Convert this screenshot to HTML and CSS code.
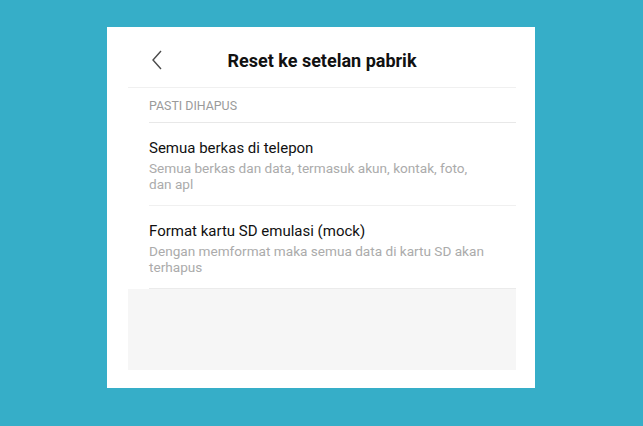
FILE: index.html
```html
<!DOCTYPE html>
<html>
<head>
<meta charset="utf-8">
<link rel="stylesheet" href="styles.css">
</head>
<body>
<div class="card">
  <div class="header">
    <svg class="back" width="12" height="20" viewBox="0 0 12 20"><path d="M10 1 L2 10 L10 19" fill="none" stroke="#4a4a4a" stroke-width="1.4"/></svg>
    <div class="title">Reset ke setelan pabrik</div>
  </div>
  <div class="section">PASTI DIHAPUS</div>
  <div class="list">
    <div class="item">
      <div class="item-title">Semua berkas di telepon</div>
      <div class="item-sub">Semua berkas dan data, termasuk akun, kontak, foto, dan apl</div>
    </div>
    <div class="item">
      <div class="item-title">Format kartu SD emulasi (mock)</div>
      <div class="item-sub">Dengan memformat maka semua data di kartu SD akan terhapus</div>
    </div>
  </div>
  <div class="footer"></div>
</div>
</body>
</html>
```
FILE: styles.css
```css
html, body {
  margin: 0;
  padding: 0;
}
body {
  background: #36aec8;
  width: 643px;
  height: 426px;
  overflow: hidden;
  font-family: Roboto, "Noto Sans", sans-serif;
  padding-top: 27px;
  padding-left: 107px;
  box-sizing: border-box;
}
.card {
  width: 428px;
  height: 361px;
  background: #fff;
  padding: 0 19px 0 21px;
  box-sizing: border-box;
}
.header {
  height: 60px;
  display: flex;
  align-items: center;
  justify-content: center;
  position: relative;
  border-bottom: 1px solid #f0f0f0;
}
.back {
  position: absolute;
  left: 23px;
  top: 23px;
}
.title {
  font-size: 18px;
  font-weight: 700;
  color: #111;
  margin-top: 6px;
}
.section {
  margin-left: 21px;
  height: 34px;
  display: flex;
  align-items: center;
  font-size: 12.4px;
  color: #9a9a9a;
  border-bottom: 1px solid #e8e8e8;
}
.list {
  margin-left: 21px;
}
.item {
  padding: 15px 0 13px;
  border-bottom: 1px solid #f0f0f0;
}
.item:last-child {
  border-bottom: 1px solid #ebebeb;
}
.item-title {
  font-size: 15px;
  color: #111;
  line-height: 20px;
}
.item-sub {
  font-size: 13.6px;
  color: #ababab;
  line-height: 16px;
  width: 336px;
  margin-top: 2px;
}
.footer {
  background: #f6f6f6;
  height: 81px;
}
```
